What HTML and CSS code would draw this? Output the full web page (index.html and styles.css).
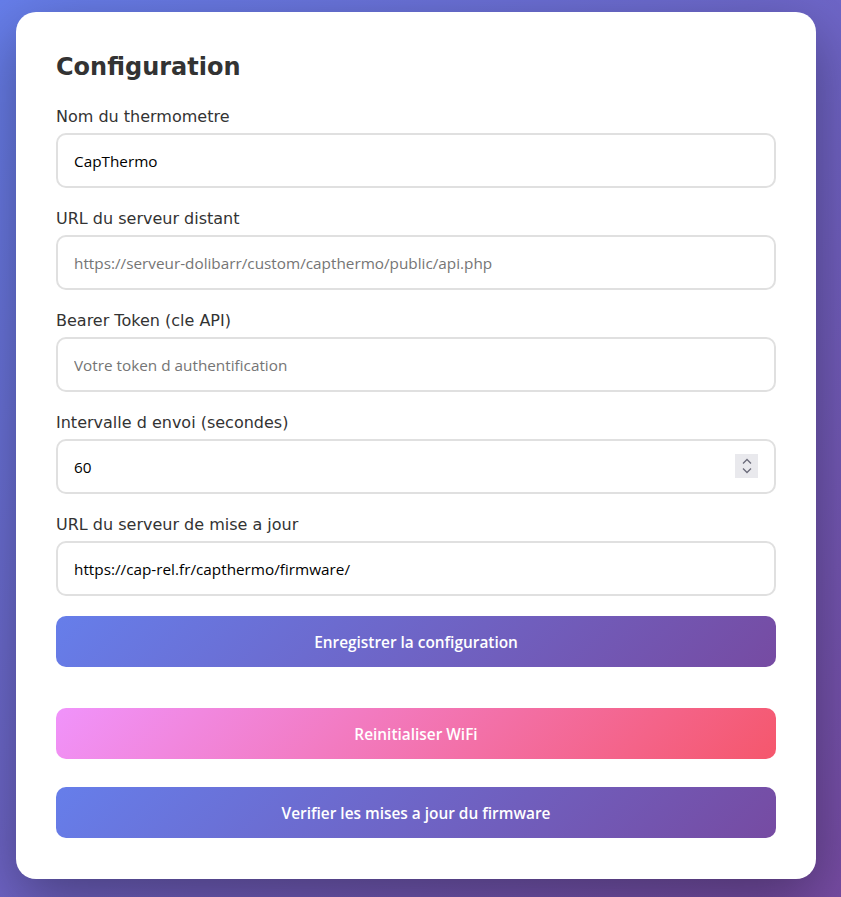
FILE: index.html
```html
<!DOCTYPE html>
<html lang="fr">
<head>
<meta charset="utf-8">
<title>Configuration</title>
<link rel="stylesheet" href="styles.css">
</head>
<body>
<div class="card">
  <h2 class="title">Configuration</h2>
  <form class="form">
    <div class="group">
      <label class="label">Nom du thermometre</label>
      <input class="field" type="text" value="CapThermo">
    </div>
    <div class="group">
      <label class="label">URL du serveur distant</label>
      <input class="field" type="text" placeholder="https://serveur-dolibarr/custom/capthermo/public/api.php">
    </div>
    <div class="group">
      <label class="label">Bearer Token (cle API)</label>
      <input class="field" type="text" placeholder="Votre token d authentification">
    </div>
    <div class="group">
      <label class="label">Intervalle d envoi (secondes)</label>
      <div class="num-wrap">
        <input class="field" type="text" value="60">
        <span class="spin"><svg width="12" height="20" viewBox="0 0 12 20"><path d="M2 7.5 L6 3.5 L10 7.5" fill="none" stroke="#6b6b7a" stroke-width="1.3"/><path d="M2 12.5 L6 16.5 L10 12.5" fill="none" stroke="#6b6b7a" stroke-width="1.3"/></svg></span>
      </div>
    </div>
    <div class="group">
      <label class="label">URL du serveur de mise a jour</label>
      <input class="field" type="text" value="https://cap-rel.fr/capthermo/firmware/">
    </div>
    <button class="btn btn-primary" type="button">Enregistrer la configuration</button>
  </form>
  <button class="btn btn-danger btn-wifi" type="button">Reinitialiser WiFi</button>
  <button class="btn btn-primary btn-fw" type="button">Verifier les mises a jour du firmware</button>
</div>
</body>
</html>
```
FILE: styles.css
```css
html, body {
  margin: 0;
  padding: 0;
}
body {
  min-height: 897px;
  background: linear-gradient(135deg, #667eea 0%, #764ba2 100%);
  font-family: "DejaVu Sans", sans-serif;
  padding: 12px 16px;
  box-sizing: border-box;
}
.card {
  width: 800px;
  box-sizing: border-box;
  background: #fff;
  border-radius: 20px;
  padding: 41px 40px 41px;
  box-shadow: 0 20px 60px rgba(0, 0, 0, 0.35);
}
.title {
  margin: 0 0 25px;
  font-size: 24px;
  font-weight: bold;
  color: #333;
  line-height: 28px;
}
.form {
  margin: 0;
}
.group {
  margin-bottom: 20px;
}
.label {
  display: block;
  margin-bottom: 6px;
  font-size: 16px;
  line-height: 21px;
  color: #333;
}
.field {
  display: block;
  width: 100%;
  box-sizing: border-box;
  height: 55px;
  padding: 0 16px;
  border: 2px solid #e0e0e0;
  border-radius: 10px;
  font-family: "Open Sans", sans-serif;
  font-size: 15.3px;
  color: #000;
  background: #fff;
  outline: none;
}
.field::placeholder {
  color: #757575;
}
.num-wrap {
  position: relative;
}
.spin {
  position: absolute;
  right: 18px;
  top: 15px;
  width: 23px;
  height: 24px;
  background: #e9e9ed;
  display: flex;
  align-items: center;
  justify-content: center;
}
.btn {
  display: block;
  width: 100%;
  height: 51px;
  padding: 1px 0 0;
  border: none;
  border-radius: 10px;
  color: #fff;
  font-family: "Open Sans", sans-serif;
  font-weight: 600;
  font-size: 15.4px;
  cursor: pointer;
}
.btn-primary {
  background: linear-gradient(135deg, #667eea 0%, #764ba2 100%);
}
.btn-danger {
  background: linear-gradient(135deg, #f093fb 0%, #f5576c 100%);
}
.btn-wifi {
  margin-top: 41px;
}
.btn-fw {
  margin-top: 28px;
}
```
